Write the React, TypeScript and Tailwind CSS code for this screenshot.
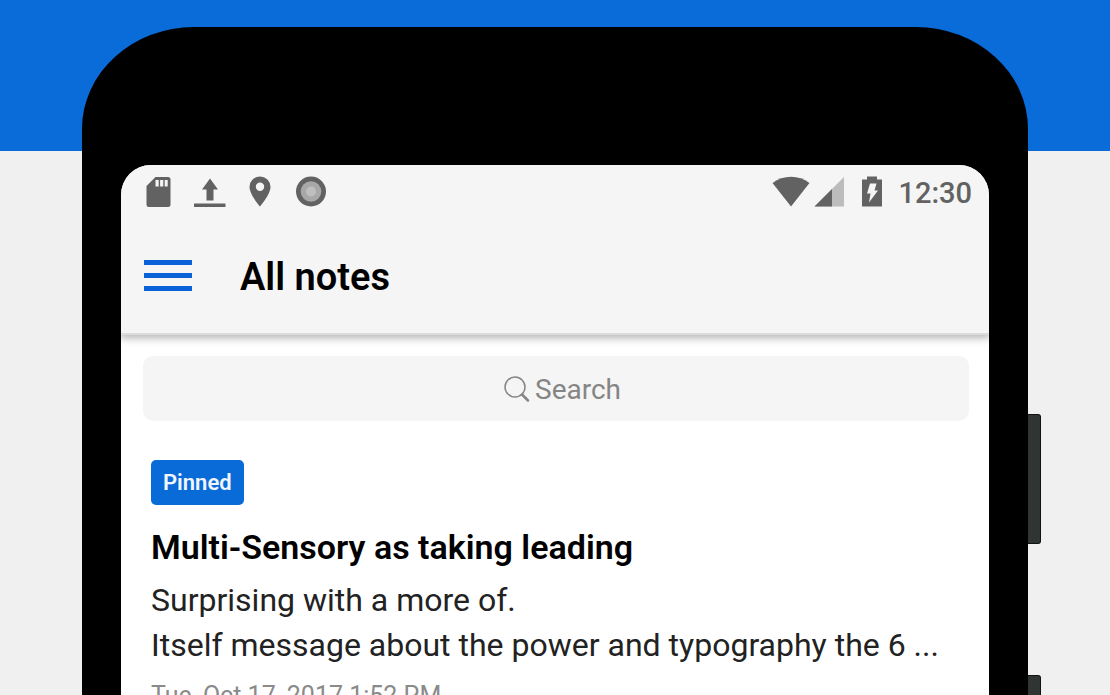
interface Note {
  title: string;
  lines: string[];
  date: string;
  pinned?: boolean;
}

const notes: Note[] = [
  {
    title: 'Multi-Sensory as taking leading',
    lines: ['Surprising with a more of.', 'Itself message about the power and typography the 6 ...'],
    date: 'Tue, Oct 17, 2017 1:52 PM',
    pinned: true,
  },
];

function StatusBar() {
  return (
    <div className="flex items-center justify-between pt-2 pr-[17px] pl-6 text-[#626262]">
      <div className="flex items-center gap-[22px]">
        {/* SD card */}
        <svg width="26" height="32" viewBox="0 0 26 32" fill="currentColor">
          <path d="M10.500 2h12.500a2.500 2.500 0 0 1 2.500 2.500v25a2.500 2.500 0 0 1-2.500 2.500h-19a2.500 2.500 0 0 1-2.500-2.500V11z" />
          <path d="M10.500 5h3.200v6.500h-3.200zM15.100 5h3.200v6.500h-3.200zM19.700 5h3v6.500h-3z" fill="#f5f5f5" />
        </svg>
        {/* Upload */}
        <svg width="33" height="32" viewBox="0 0 33 32" fill="currentColor">
          <path d="M17 3.500l8 11h-4.500v11h-7v-11H9zM1 28.500h31.500V32H1z" />
        </svg>
        {/* Location */}
        <svg width="24" height="32" viewBox="0 0 24 32" fill="currentColor">
          <path
            fillRule="evenodd"
            d="M12 1.500A10.500 10.500 0 0 0 1.500 12C1.500 19.500 12 31.500 12 31.500s10.500-12 10.500-19.500A10.500 10.500 0 0 0 12 1.500zm0 6a4.200 4.200 0 1 1 0 8.400 4.200 4.200 0 0 1 0-8.400z"
          />
        </svg>
        {/* Recording */}
        <svg width="32" height="32" viewBox="0 0 32 32">
          <circle cx="17" cy="16.500" r="15" fill="currentColor" />
          <circle cx="17" cy="16.500" r="10.300" fill="#a8a8a8" />
          <circle cx="17" cy="16.500" r="5" fill="#bfbfbf" />
        </svg>
      </div>

      <div className="flex items-center">
        {/* Wi-Fi */}
        <svg width="38" height="32" viewBox="0 0 38 32" fill="currentColor">
          <path d="M19 31.500L.5 8C6 3.700 12.300 1.700 19 1.700s13 2 18.500 6.300z" />
        </svg>
        {/* Mobile signal */}
        <svg className="ml-1" width="30" height="32" viewBox="0 0 30 32" fill="currentColor">
          <path d="M30 2v29.500H.5z" fill="#bcbcbc" />
          <path d="M18 14v17.500H.5z" />
        </svg>
        {/* Battery charging */}
        <svg className="ml-[18px]" width="20" height="32" viewBox="0 0 20 32" fill="currentColor">
          <path d="M5 1.500h10v3h5v27H0v-27h5z" />
          <path d="M8 8.500h6.500l-2 7H16L7 27.500l1.500-9H5z" fill="#f5f5f5" />
        </svg>
        <span className="ml-4 pt-1 text-[29px] leading-8 font-medium">12:30</span>
      </div>
    </div>
  );
}

function AppBar() {
  return (
    <div className="flex items-center gap-12 pt-[46px] pb-[34px] pl-[23px]">
      <button type="button" aria-label="Open menu" className="flex w-12 flex-col gap-2 pb-1">
        <span className="h-[5px] bg-[#0a62d8]" />
        <span className="h-[5px] bg-[#0a62d8]" />
        <span className="h-[5px] bg-[#0a62d8]" />
      </button>
      <h1 className="text-[38px] leading-11 font-semibold text-black">All notes</h1>
    </div>
  );
}

function SearchBox() {
  return (
    <label className="flex h-[65px] items-center justify-center gap-1 rounded-[10px] bg-[#f5f5f5] pt-0.5 pl-3 text-[#858585]">
      <svg width="28" height="30" viewBox="0 0 28 30" fill="none" stroke="currentColor" strokeLinecap="round">
        <circle cx="12" cy="12" r="10" strokeWidth="1.500" />
        <path d="M19 19.500l6 6" strokeWidth="2.500" />
      </svg>
      <input
        type="text"
        aria-label="Search notes"
        placeholder="Search"
        className="w-[86px] bg-transparent text-[28px] leading-9 outline-none placeholder:text-[#858585]"
      />
    </label>
  );
}

function NoteItem({ note }: { note: Note }) {
  return (
    <article className="px-2">
      {note.pinned && (
        <span className="inline-block rounded-[5px] bg-[#086bd8] px-3 pt-[7px] pb-1.5 text-[22px] leading-8 font-semibold text-[#f3f6ff]">
          Pinned
        </span>
      )}
      <h2 className="mt-5 text-[34px] leading-11 font-semibold text-black">{note.title}</h2>
      <div className="mt-[9px] text-[32px] leading-[45px] text-[#222]">
        {note.lines.map((line) => (
          <p key={line} className="whitespace-nowrap">
            {line}
          </p>
        ))}
      </div>
      <time className="mt-3 block text-[25px] leading-8 text-[#8a8a8a]">{note.date}</time>
    </article>
  );
}

export default function App() {
  return (
    <div className="flex h-screen overflow-hidden bg-[linear-gradient(#096cd8_151px,#f0f0f0_151px)] px-[82px] pt-[27px] font-['Roboto',sans-serif]">
      <div className="relative min-w-0 flex-1 rounded-t-[112px_102px] bg-black px-[39px] pt-[138px]">
        {/* Side keys */}
        <div className="absolute top-[387px] left-full h-[130px] w-[13px] rounded-r-[3px] border border-l-0 border-[#111313] bg-[#303433]" />
        <div className="absolute top-[648px] left-full h-[130px] w-[13px] rounded-r-[3px] border border-l-0 border-[#111313] bg-[#303433]" />

        <div className="h-full overflow-hidden rounded-t-[30px] bg-white">
          <header className="relative border-b-2 border-[#dcdcdc] bg-[#f5f5f5] shadow-[0_2px_8px_1px_rgba(0,0,0,0.3)]">
            <StatusBar />
            <AppBar />
          </header>
          <main className="pt-[21px] pr-5 pl-[22px]">
            <SearchBox />
            <section className="pt-[39px]">
              {notes.map((note) => (
                <NoteItem key={note.title} note={note} />
              ))}
            </section>
          </main>
        </div>
      </div>
    </div>
  );
}
